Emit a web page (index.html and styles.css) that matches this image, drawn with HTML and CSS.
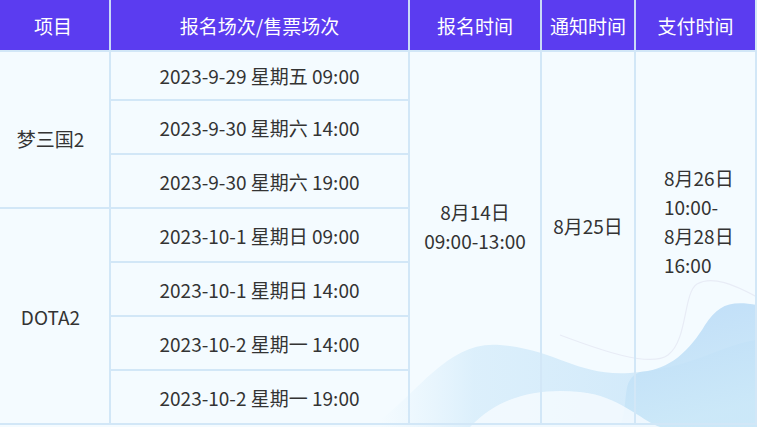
FILE: index.html
```html
<!DOCTYPE html>
<html lang="zh">
<head>
<meta charset="utf-8">
<link rel="stylesheet" href="styles.css">
</head>
<body>
<div class="wrap">
  <svg class="deco" width="757" height="427" viewBox="0 0 757 427" aria-hidden="true">
    <defs>
      <linearGradient id="g1" x1="0" y1="0" x2="1" y2="0">
        <stop offset="0" stop-color="#e0f1fc" stop-opacity="0"/>
        <stop offset="0.25" stop-color="#d9eefb" stop-opacity="0.9"/>
        <stop offset="1" stop-color="#cce6f9"/>
      </linearGradient>
      <linearGradient id="g2" x1="0" y1="0" x2="0.3" y2="1">
        <stop offset="0" stop-color="#b9daf7"/>
        <stop offset="1" stop-color="#cbe8f8"/>
      </linearGradient>
    </defs>
    <path d="M380 420 C420 390 450 340 500 345 C560 350 580 380 640 372 C700 365 720 345 757 340 L757 427 L380 427 Z" fill="url(#g1)"/>
    <path d="M640 372 C670 370 690 350 705 325 C718 305 730 300 757 305 L757 427 L620 427 C630 400 620 380 640 372 Z" fill="url(#g2)" opacity="0.9"/>
    <path d="M470 427 C500 395 540 388 580 392 C620 396 640 420 660 427 Z" fill="#f6fbff" opacity="0.8"/>
    <path d="M757 297 C735 285 712 275 697 284 C683 293 688 340 668 355 C650 368 600 350 560 335" fill="none" stroke="#e8ecf6" stroke-width="1.2"/>
  </svg>
  <table class="tbl">
    <thead>
      <tr>
        <th class="c1">项目</th>
        <th class="c2">报名场次/售票场次</th>
        <th class="c3">报名时间</th>
        <th class="c4">通知时间</th>
        <th class="c5">支付时间</th>
      </tr>
    </thead>
    <tbody>
      <tr class="first">
        <td rowspan="3" class="game game1">梦三国2</td>
        <td>2023-9-29 星期五 09:00</td>
        <td rowspan="7" class="span">8月14日<br>09:00-13:00</td>
        <td rowspan="7" class="span">8月25日</td>
        <td rowspan="7" class="span left"><div class="pay">8月26日<br>10:00-<br>8月28日<br>16:00</div></td>
      </tr>
      <tr><td>2023-9-30 星期六 14:00</td></tr>
      <tr><td>2023-9-30 星期六 19:00</td></tr>
      <tr>
        <td rowspan="4" class="game">DOTA2</td>
        <td>2023-10-1 星期日 09:00</td>
      </tr>
      <tr><td>2023-10-1 星期日 14:00</td></tr>
      <tr><td>2023-10-2 星期一 14:00</td></tr>
      <tr><td>2023-10-2 星期一 19:00</td></tr>
    </tbody>
  </table>
</div>
</body>
</html>
```
FILE: styles.css
```css
html, body {
  margin: 0;
  padding: 0;
  background: #ffffff;
}
.wrap {
  position: relative;
  width: 757px;
  height: 427px;
  background: #f4fbff;
  overflow: hidden;
}
.deco {
  position: absolute;
  left: 0;
  top: 0;
  z-index: 0;
}
.tbl {
  position: relative;
  z-index: 1;
  border-collapse: collapse;
  width: 757px;
  table-layout: fixed;
  font-family: "Noto Sans CJK SC", "Noto Sans", sans-serif;
  color: #333333;
}
.tbl th {
  background: #5b3cf0;
  color: #ffffff;
  font-weight: 400;
  font-size: 19px;
  height: 50px;
  padding: 0;
  border-left: 2px solid #c9d9f7;
  border-bottom: 2px solid #d2e7f7;
  text-align: center;
}
.tbl th.c1 { width: 106px; border-left: none; padding-right: 3px; }
.tbl th.c2 { width: 297px; }
.tbl th.c3 { width: 130px; }
.tbl th.c4 { width: 92px; }
.tbl th.c5 { border-right: 2px solid #d2e7f7; }
.tbl td {
  font-size: 19px;
  height: 52px;
  padding: 0;
  text-align: center;
  vertical-align: middle;
  border: 2px solid #d2e7f7;
  line-height: 29px;
}
.tbl tr.first td { border-top: none; }
.tbl tr.first td:nth-child(2) { height: 47px; }
.tbl td:first-child { border-left: none; }
.tbl td.game { padding-right: 8px; }
.tbl td.game1 { padding-top: 18px; }
.tbl td.span { padding-bottom: 24px; }
.tbl td.left { text-align: left; padding-bottom: 34px; }
.pay {
  padding-left: 28px;
  line-height: 29px;
}
```
